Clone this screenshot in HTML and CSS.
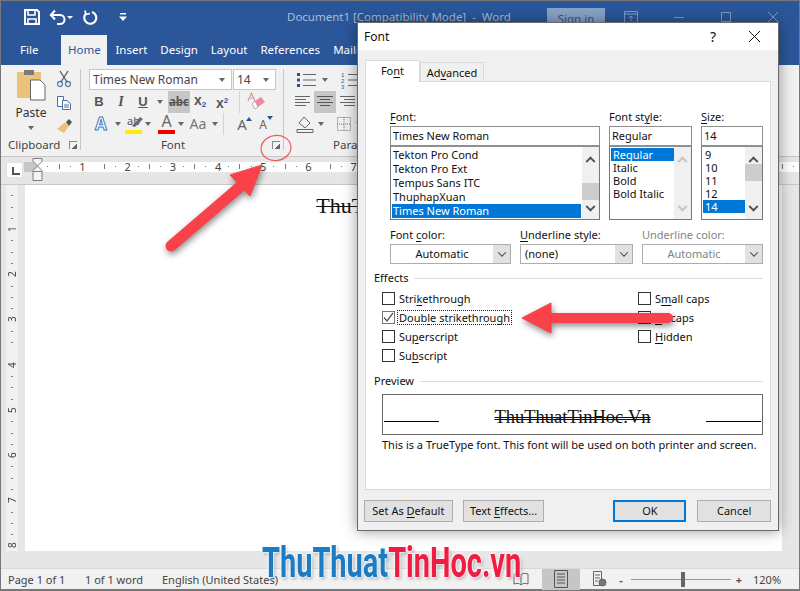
FILE: index.html
```html
<!DOCTYPE html>
<html lang="en">
<head>
<meta charset="UTF-8">
<meta name="viewport" content="width=device-width, initial-scale=1.0">
<title>Document1 - Word</title>
<link rel="stylesheet" href="styles.css">
</head>
<body>
<div class="app">
    <!-- title bar -->
    <header class="titlebar">
        <div class="qat">
            <svg width="18" height="18" viewBox="0 0 18 18" fill="none" stroke="#fff" stroke-width="2"><path d="M2 2h12l2 2v12H2z"/><path d="M5 2v5h7V2M5 16v-5h8v5" stroke-width="1.6"/></svg>
            <svg width="24" height="18" viewBox="0 0 24 18" fill="none" stroke="#fff" stroke-width="2"><path d="M2 7h9a4.500 4.500 0 0 1 0 9H8M6 2.500 1.800 7 6 11.500"/><path d="M18 8h6l-3 3z" fill="#fff" stroke="none"/></svg>
            <svg class="qat-redo" width="16" height="18" viewBox="0 0 16 18" fill="none" stroke="#fff" stroke-width="2.200"><path d="M10 4a6 6 0 1 1-6 1.500"/><path d="M3 2.500 4 6.500 8 5.500" stroke-width="1.800"/></svg>
            <svg class="qat-more" width="10" height="10" viewBox="0 0 10 10" fill="#fff"><path d="M2 1h6v1.500H2zM1 4.500h8L5 9z"/></svg>
        </div>
        <div class="doc-title">Document1 [Compatibility Mode]&nbsp; -&nbsp; Word</div>
        <div class="signin">Sign in</div>
        <div class="win-btns">
            <svg width="14" height="12" viewBox="0 0 14 12" fill="none" stroke="#7f9cc7"><path d="M.5.500h13v11H.5zM.5 3h13M7 10V5M5 7l2-2 2 2"/></svg>
            <svg width="12" height="12" viewBox="0 0 12 12" stroke="#7f9cc7"><path d="M1 6.500h10"/></svg>
            <svg width="12" height="12" viewBox="0 0 12 12" fill="none" stroke="#7f9cc7"><path d="M1.500 1.500h9v9h-9z"/></svg>
            <svg width="12" height="12" viewBox="0 0 12 12" stroke="#7f9cc7"><path d="M1 1l10 10M11 1 1 11"/></svg>
        </div>
    </header>

    <!-- ribbon tabs -->
    <nav class="tabs">
        <span class="tab tab-file">File</span>
        <span class="tab tab-active">Home</span>
        <span class="tab">Insert</span>
        <span class="tab">Design</span>
        <span class="tab">Layout</span>
        <span class="tab">References</span>
        <span class="tab">Mailings</span>
    </nav>

    <!-- ribbon -->
    <section class="ribbon">
        <div class="group group-clip">
            <div class="clip-body">
                <div class="paste">
                    <svg width="30" height="32" viewBox="0 0 30 32"><path d="M1 3h24v26H1z" fill="#eac27c"/><path d="M8 1h10v5H8z" fill="#7a7a7a"/><path d="M14.500 11H24l5 5v15H14.500z" fill="#fff" stroke="#666"/></svg>
                    <span>Paste</span>
                    <i class="caret"></i>
                </div>
                <div class="clip-tools">
                    <svg width="16" height="18" viewBox="0 0 16 18" fill="none" stroke="#5a84b8" stroke-width="1.300"><circle cx="4" cy="14" r="2.500"/><circle cx="12" cy="14" r="2.500"/><path d="M5 12 12 1M11 12 4 1" stroke="#555"/></svg>
                    <svg width="16" height="16" viewBox="0 0 16 16" fill="#fff" stroke="#4a6f9e"><path d="M1.500 1.500h6v10h-6z"/><path d="M6.500 5.500H11l3.500 3v6h-8z"/><path d="M8 10h5M8 12h5" /></svg>
                    <svg width="18" height="16" viewBox="0 0 18 16"><path d="M10 4l4 4-5 7-7-4z" fill="#eac27c"/><path d="M11 4l3-3 3 3-3 4z" fill="#555"/></svg>
                </div>
            </div>
            <div class="group-label"><span>Clipboard</span><i class="launcher"></i></div>
        </div>

        <div class="group group-font">
            <div class="font-row font-combos">
                <div class="combo combo-name">Times New Roman<i class="caret"></i></div>
                <div class="combo combo-size">14<i class="caret"></i></div>
            </div>
            <div class="font-row font-toggles">
                <b class="rb rb-b">B</b>
                <i class="rb rb-i">I</i>
                <u class="rb rb-u">U</u>
                <i class="caret caret-u"></i>
                <s class="rb rb-abc">abc</s>
                <b class="rb rb-sub">x<sub>2</sub></b>
                <b class="rb rb-sup">x<sup>2</sup></b>
                <em class="rb-sep"></em>
                <svg class="rb-eraser" width="20" height="20" viewBox="0 0 20 20"><path d="M9 9l6-4 4 5-7 5z" fill="#ee8ba0"/><path d="M9 9l3 6-3 2-3-5z" fill="#fff" stroke="#aaa"/><path d="M2 9 5.500 1 9 9M3.500 6h4" fill="none" stroke="#d79a9a" stroke-width="1.200"/></svg>
            </div>
            <div class="font-row font-colors">
                <span class="rb-fx">A</span><i class="caret"></i>
                <span class="rb-mark">ab<svg width="14" height="12" viewBox="0 0 14 12"><path d="M2 10 10 1l3 2-8 8z" fill="#6b6b6b"/></svg></span><i class="caret"></i>
                <span class="rb-color">A</span><i class="caret"></i>
                <span class="rb-case">Aa</span><i class="caret"></i>
                <em class="rb-sep"></em>
                <span class="rb-grow">A<i class="up"></i></span>
                <span class="rb-shrink">A<i class="down"></i></span>
            </div>
            <div class="group-label"><span class="label-mid">Font</span><i class="launcher"></i></div>
        </div>

        <div class="group group-para">
            <div class="para-row para-lists">
                <svg width="22" height="16" viewBox="0 0 22 16" fill="none" stroke="#666"><path d="M7 2.500h13M7 8h13M7 13.500h13"/><path d="M1 1h3v3H1zM1 6.500h3v3H1zM1 12h3v3H1z" fill="#2b579a" stroke="none"/></svg><i class="caret"></i>
                <svg width="22" height="18" viewBox="0 0 22 18" fill="none" stroke="#666"><path d="M8 3.500h13M8 9h13M8 14.500h13"/><g fill="#2b579a" stroke="none" font-size="6" font-family="Liberation Sans"><text x="1" y="6">1</text><text x="1" y="12">2</text><text x="1" y="18">3</text></g></svg><i class="caret"></i>
            </div>
            <div class="para-row para-align">
                <svg class="al" width="22" height="22" viewBox="0 0 22 22" stroke="#666"><path d="M3 5.500h15M3 8.500h11M3 11.500h15M3 14.500h11"/></svg>
                <svg class="al al-on" width="22" height="22" viewBox="0 0 22 22" stroke="#555"><path d="M3 5.500h16M6 8.500h10M3 11.500h16M6 14.500h10"/></svg>
                <svg class="al" width="22" height="22" viewBox="0 0 22 22" stroke="#666"><path d="M4 5.500h15M8 8.500h11M4 11.500h15M8 14.500h11"/></svg>
            </div>
            <div class="para-row para-lists">
                <svg width="18" height="18" viewBox="0 0 18 18" fill="none" stroke="#666"><path d="M3 8l5-6 6 6-5 5z"/><path d="M1 14.500h16v3H1z"/></svg><i class="caret"></i>
                <svg width="16" height="16" viewBox="0 0 16 16" fill="none" stroke="#777" stroke-dasharray="1 1"><path d="M1.500 1.500h13v13h-13zM8 1v14M1 8h14"/></svg><i class="caret"></i>
            </div>
            <div class="group-label"><span>Paragraph</span></div>
        </div>
    </section>

    <!-- horizontal ruler -->
    <div class="hruler-wrap">
        <i class="ruler-corner"></i>
        <div class="hruler">
            <span>1</span><span>2</span><span>3</span><span>4</span><span>5</span><span>6</span><span>7</span>
            <svg class="indent" width="11" height="24" viewBox="0 0 11 24" fill="#f4f4f4" stroke="#7d7d7d"><path d="M1 .500h9v3L5.500 8 1 3.500zM5.500 8l4.500 4.500v1H1v-1z"/><path d="M1 13.500h9v9H1z"/></svg>
        </div>
    </div>

    <!-- document area -->
    <main class="doc-area">
        <div class="vruler">
            <span>1</span><span>2</span><span>3</span><span>4</span><span>5</span><span>6</span><span>7</span><span>8</span>
        </div>
        <div class="page"><p class="doc-text">ThuThuatTinHoc.Vn</p></div>
    </main>

    <!-- status bar -->
    <footer class="statusbar">
        <span class="st st-page">Page 1 of 1</span>
        <span class="st st-words">1 of 1 word</span>
        <span class="st st-lang">English (United States)</span>
        <svg class="st-read" width="16" height="14" viewBox="0 0 16 14" fill="none" stroke="#666"><path d="M1 2c3-1 5-1 7 1 2-2 4-2 7-1v10c-3-1-5-1-7 1-2-2-4-2-7-1zM8 3v10"/></svg>
        <span class="view-on"><svg width="14" height="18" viewBox="0 0 14 18" fill="none" stroke="#555"><path d="M.5.500h13v17H.5zM3 4h8M3 7h8M3 10h8M3 13h8"/></svg></span>
        <svg class="st-web" width="16" height="16" viewBox="0 0 16 16" fill="none" stroke="#666"><path d="M2.500.500h8v14h-8zM4 4h5M4 7h5M4 10h3"/><circle cx="11.500" cy="11.500" r="3.500" fill="#777"/></svg>
        <b class="zoom-sign">-</b>
        <div class="zoom-track"><i></i></div>
        <b class="zoom-sign">+</b>
        <span class="st st-zoom">120%</span>
    </footer>
</div>

<!-- font dialog -->
<div class="dialog">
    <div class="dlg-title">
        <span>Font</span>
        <span class="dlg-help">?</span>
        <svg width="13" height="13" viewBox="0 0 13 13" stroke="#111"><path d="M1 1l11 11M12 1 1 12"/></svg>
    </div>
    <div class="dlg-body">
        <div class="dlg-tabs">
            <span class="dlg-tab dlg-tab-on">Fo<u>n</u>t</span>
            <span class="dlg-tab">Ad<u>v</u>anced</span>
        </div>
        <div class="panel">
            <div class="pickers">
                <div class="picker">
                    <label><u>F</u>ont:</label>
                    <div class="field">Times New Roman</div>
                    <div class="list list-font">
                        <ul>
                            <li>Tekton Pro Cond</li>
                            <li>Tekton Pro Ext</li>
                            <li>Tempus Sans ITC</li>
                            <li>ThuphapXuan</li>
                            <li class="sel">Times New Roman</li>
                        </ul>
                        <div class="scroll"><i class="up-ch"></i><em class="thumb thumb-font"></em><i class="down-ch"></i></div>
                    </div>
                </div>
                <div class="picker">
                    <label>Font st<u>y</u>le:</label>
                    <div class="field">Regular</div>
                    <div class="list list-tight">
                        <ul>
                            <li class="sel">Regular</li>
                            <li>Italic</li>
                            <li>Bold</li>
                            <li>Bold Italic</li>
                        </ul>
                        <div class="scroll scroll-off"><i class="up-ch"></i><i class="down-ch"></i></div>
                    </div>
                </div>
                <div class="picker">
                    <label><u>S</u>ize:</label>
                    <div class="field">14</div>
                    <div class="list list-tight">
                        <ul>
                            <li>9</li>
                            <li>10</li>
                            <li>11</li>
                            <li>12</li>
                            <li class="sel">14</li>
                        </ul>
                        <div class="scroll"><i class="up-ch"></i><em class="thumb thumb-size"></em><i class="down-ch"></i></div>
                    </div>
                </div>
            </div>

            <div class="selects">
                <div class="picker">
                    <label>Font <u>c</u>olor:</label>
                    <div class="select select-mid">Automatic<i class="drop"><i class="down-ch"></i></i></div>
                </div>
                <div class="picker">
                    <label><u>U</u>nderline style:</label>
                    <div class="select">(none)<i class="drop"><i class="down-ch"></i></i></div>
                </div>
                <div class="picker picker-off">
                    <label>Underline color:</label>
                    <div class="select select-mid">Automatic<i class="drop"><i class="down-ch"></i></i></div>
                </div>
            </div>

            <div class="legend"><span>Effects</span></div>
            <div class="effects">
                <div class="effects-col">
                    <div class="check"><i class="box"></i>Stri<u>k</u>ethrough</div>
                    <div class="check"><i class="box box-on"><svg width="11" height="11" viewBox="0 0 11 11" fill="none" stroke="#555" stroke-width="1.300"><path d="M1 5.500 4 9l6-8"/></svg></i><span class="focus">Doub<u>l</u>e strikethrough</span></div>
                    <div class="check"><i class="box"></i>Su<u>p</u>erscript</div>
                    <div class="check"><i class="box"></i>Su<u>b</u>script</div>
                </div>
                <div class="effects-col">
                    <div class="check"><i class="box"></i>S<u>m</u>all caps</div>
                    <div class="check"><i class="box"></i><u>A</u>ll caps</div>
                    <div class="check"><i class="box"></i><u>H</u>idden</div>
                </div>
            </div>

            <div class="legend legend-preview"><span>Preview</span></div>
            <div class="preview">
                <i class="preview-line"></i>
                <span class="preview-text">ThuThuatTinHoc.Vn</span>
                <i class="preview-line"></i>
            </div>
            <p class="note">This is a TrueType font. This font will be used on both printer and screen.</p>
        </div>
        <div class="dlg-buttons">
            <span class="btn btn-default">Set As <u>D</u>efault</span>
            <span class="btn btn-fx">Text <u>E</u>ffects...</span>
            <span class="btn btn-ok">OK</span>
            <span class="btn btn-cancel">Cancel</span>
        </div>
    </div>
</div>

<!-- hand drawn annotations -->
<svg class="marks" width="800" height="591" viewBox="0 0 800 591">
    <ellipse cx="276" cy="148" rx="15" ry="12.500" fill="none" stroke="#ee5a5e" stroke-width="1.200" transform="rotate(-8 276 148)"/>
    <g class="arrow" fill="#f94149" stroke="#f94149">
        <path d="M171 246 241 186" stroke-width="11" stroke-linecap="round"/>
        <path d="M262 165 230 175 250 196z" stroke-width="1" stroke-linejoin="round"/>
        <path d="M668 318H545" stroke-width="10" stroke-linecap="round"/>
        <path d="M522 318 551 303V333z" stroke-width="1" stroke-linejoin="round"/>
    </g>
</svg>

<div class="brand"><span class="brand-blue">ThuThuat</span><span class="brand-red">TinHoc.vn</span></div>
</body>
</html>
```

FILE: styles.css
```css
* {
    box-sizing: border-box;
}

html, body {
    margin: 0;
    height: 100%;
    overflow: hidden;
}

body {
    position: relative;
    font-family: "Noto Sans", sans-serif;
    font-size: 12px;
    color: #444;
}

i, em {
    font-style: normal;
}

.app {
    display: flex;
    flex-direction: column;
    height: 591px;
    border: 1px solid #777;
    border-width: 1px 1px 2px 1px;
    background: #e6e6e6;
}

/* title bar */
.titlebar {
    display: flex;
    align-items: center;
    height: 31px;
    flex: none;
    background: #2b579a;
    color: #a9bcd9;
}

.qat {
    display: flex;
    align-items: center;
    width: 286px;
    padding-left: 22px;
    gap: 8px;
}

.qat-redo {
    margin-left: 1px;
}

.qat-more {
    margin-left: 12px;
}

.doc-title {
    width: 260px;
    font-size: 11.5px;
}

.signin {
    width: 58px;
    height: 24px;
    margin-top: 6px;
    background: #87a3c9;
    color: #2b579a;
    text-align: center;
    line-height: 22px;
    font-size: 11.5px;
}

.win-btns {
    display: flex;
    align-items: center;
    gap: 35px;
    margin-left: 19px;
}

/* ribbon tabs */
.tabs {
    display: flex;
    align-items: flex-end;
    height: 33px;
    flex: none;
    padding-left: 19px;
    background: #2b579a;
    color: #fff;
    font-size: 11.5px;
}

.tab {
    height: 30px;
    line-height: 29px;
    margin-right: 13px;
}

.tab-file {
    margin-right: 23px;
}

.tab-active {
    width: 46px;
    margin-right: 8px;
    background: #f1f1f1;
    color: #2b579a;
    text-align: center;
}

/* ribbon */
.ribbon {
    display: flex;
    height: 92px;
    flex: none;
    background: #f1f1f1;
    border-bottom: 1px solid #c6c6c6;
    padding-top: 4px;
}

.group {
    position: relative;
    border-right: 1px solid #c6c6c6;
    margin-bottom: 6px;
}

.group-clip {
    width: 80px;
}

.group-font {
    width: 203px;
    padding-left: 8px;
}

.group-para {
    width: 200px;
    padding-left: 8px;
    border-right: none;
}

.group-label {
    position: absolute;
    left: 0;
    right: 0;
    bottom: -3px;
    height: 16px;
    padding-left: 7px;
    font-size: 11.5px;
    line-height: 16px;
    color: #444;
}

.label-mid {
    position: absolute;
    left: 0;
    width: 100%;
    padding-right: 18px;
    text-align: center;
}

.group-para .group-label {
    padding-left: 49px;
}

.launcher {
    position: absolute;
    right: 3px;
    top: 4px;
    width: 8px;
    height: 8px;
    border: 1px solid #888;
    border-width: 1px 0 0 1px;
}

.launcher::after {
    content: "";
    position: absolute;
    right: 0;
    bottom: 0;
    width: 5px;
    height: 5px;
    background: linear-gradient(135deg, transparent 45%, #666 45%);
}

.caret {
    display: inline-block;
    width: 0;
    height: 0;
    border: 3.5px solid transparent;
    border-top: 4px solid #666;
    border-bottom: 0;
}

.clip-body {
    display: flex;
    padding-left: 15px;
}

.paste {
    display: flex;
    flex-direction: column;
    align-items: center;
    width: 30px;
    font-size: 12px;
    color: #333;
}

.paste span {
    margin-top: 3px;
    line-height: 17px;
}

.paste .caret {
    margin-top: 5px;
}

.clip-tools {
    display: flex;
    flex-direction: column;
    align-items: center;
    gap: 7px;
    margin-left: 9px;
    padding-top: 1px;
}

.font-row {
    display: flex;
    align-items: center;
    height: 22px;
}

.font-combos {
    height: 21px;
    margin-bottom: 1px;
}

.combo {
    display: flex;
    align-items: center;
    justify-content: space-between;
    height: 21px;
    padding: 0 6px 0 3px;
    background: #fff;
    border: 1px solid #c6c6c6;
    font-size: 12px;
    color: #444;
}

.combo-name {
    width: 143px;
}

.combo-size {
    width: 43px;
    margin-left: 1px;
}

.rb {
    display: block;
    text-align: center;
    font-size: 13px;
    color: #555;
    line-height: 22px;
    text-decoration-thickness: 1px;
}

.rb-b {
    width: 22px;
    margin-left: -1px;
    font-family: "Liberation Sans", sans-serif;
}

.rb-i {
    width: 22px;
    font-family: "Liberation Serif", serif;
    font-style: italic;
    font-weight: bold;
    font-size: 14px;
}

.rb-u {
    width: 22px;
    font-family: "Liberation Sans", sans-serif;
    font-weight: bold;
}

.caret-u {
    margin: 0 5px 0 3px;
}

.rb-abc {
    width: 22px;
    background: #c6c6c6;
    font-size: 11.5px;
    font-weight: bold;
}

.rb-sub, .rb-sup {
    width: 22px;
    font-family: "Liberation Sans", sans-serif;
    font-size: 14px;
}

.rb-sub {
    margin-left: -1px;
}

.rb-sub sub {
    font-size: 8px;
    color: #2b579a;
    vertical-align: -2px;
}

.rb-sup sup {
    font-size: 8px;
    color: #2b579a;
    vertical-align: 5px;
}

.rb-sep {
    display: block;
    width: 1px;
    height: 22px;
    margin: 0 6px 0 6px;
    background: #d4d4d4;
}

.font-colors span {
    display: block;
    position: relative;
    font-family: "Noto Sans", sans-serif;
    text-align: center;
    line-height: 20px;
}

.font-colors .caret {
    margin-left: 3px;
}

.rb-fx {
    width: 22px;
    margin-left: 1px;
    font-size: 17px;
    font-weight: bold;
    color: #fff;
    -webkit-text-stroke: 1px #3f7cc2;
}

.rb-mark {
    width: 17px;
    height: 20px;
    margin-left: 4px;
    font-size: 11px;
    border-bottom: 4px solid #ffed00;
    line-height: 14px !important;
    color: #555;
    white-space: nowrap;
}

.rb-mark svg {
    position: absolute;
    left: 5px;
    top: 2px;
}

.rb-color {
    width: 17px;
    height: 20px;
    margin-left: 7px;
    font-size: 16px;
    border-bottom: 4px solid #f00000;
    line-height: 15px !important;
    color: #666;
}

.rb-case {
    width: 22px;
    margin-left: 3px;
    font-size: 14px;
    color: #777;
}

.font-colors .rb-sep {
    margin-left: 5px;
    margin-right: 7px;
}

.rb-grow, .rb-shrink {
    width: 22px;
    color: #666;
    font-size: 15px;
}

.rb-shrink {
    margin-left: -1px;
    font-size: 12px;
    padding-top: 2px;
}

.up, .down {
    position: absolute;
    right: 1px;
    top: 3px;
    width: 0;
    height: 0;
    border: 3px solid transparent;
}

.up {
    border-bottom: 4px solid #2b579a;
    border-top: 0;
}

.down {
    border-top: 4px solid #2b579a;
    border-bottom: 0;
}

.para-row {
    display: flex;
    align-items: center;
    gap: 4px;
    height: 22px;
}

.para-lists {
    padding-left: 4px;
}

.para-row svg + .caret {
    margin-right: 8px;
}

.para-align {
    gap: 0;
}

.al-on {
    background: #c6c6c6;
}

/* rulers */
.hruler-wrap {
    display: flex;
    height: 28px;
    flex: none;
    padding: 5px 0 0 5px;
    background: #e6e6e6;
    border-bottom: 1px solid #c8c8c8;
}

.ruler-corner {
    width: 17px;
    height: 16px;
    background: #fff;
    border: 1px solid #e2e2e2;
    position: relative;
}

.ruler-corner::after {
    content: "";
    position: absolute;
    left: 5px;
    top: 4px;
    width: 6px;
    height: 6px;
    border: solid #555;
    border-width: 0 0 2px 2px;
}

.hruler {
    position: relative;
    display: flex;
    width: 800px;
    height: 10px;
    margin-left: 1px;
    padding-left: 54px;
    font-size: 11px;
    line-height: 10px;
    color: #444;
    background:
        linear-gradient(#c6c6c6, #c6c6c6) 0 0 / 13px 10px no-repeat,
        repeating-linear-gradient(90deg, transparent 0 10.3px, #777 10.3px 11.3px) 13px 4px / 100% 1px no-repeat,
        repeating-linear-gradient(90deg, transparent 0 21.6px, #777 21.6px 22.6px) 13px 2px / 100% 5px no-repeat,
        #fff;
    background-color: #fff;
}

.hruler span {
    flex: none;
    width: 10px;
    margin-right: 35.200px;
    background: #fff;
    text-align: center;
}

.indent {
    position: absolute;
    left: 8px;
    top: -4px;
}

.doc-area {
    display: flex;
    flex: 1;
    min-height: 0;
    padding-bottom: 17px;
    padding-left: 5px;
}

.vruler {
    width: 12px;
    display: flex;
    flex-direction: column;
    flex: none;
    padding-top: 38px;
    background:
        repeating-linear-gradient(transparent 0 10.3px, #777 10.3px 11.3px) 5px 0 / 2px 100% no-repeat,
        #f1f1f1;
    font-size: 10px;
    color: #444;
}

.vruler span {
    flex: none;
    height: 12px;
    margin-bottom: 33.200px;
    background: #f1f1f1;
    text-align: center;
    line-height: 12px;
    writing-mode: vertical-rl;
    transform: rotate(180deg);
}

.page {
    width: 757px;
    margin-left: 7px;
    padding-left: 11px;
    background: #fff;
}

.doc-text {
    margin: 8px 0 0;
    text-align: center;
    font-family: "Liberation Serif", serif;
    font-size: 22px;
    line-height: 26px;
    color: #111;
    text-decoration: line-through;
    text-decoration-thickness: 1px;
}

/* status bar */
.statusbar {
    display: flex;
    align-items: center;
    height: 21px;
    flex: none;
    padding-left: 7px;
    background: #f1f1f1;
    border-top: 1px solid #d8d8d8;
    font-size: 11px;
    color: #444;
}

.st-page {
    width: 77px;
}

.st-words {
    width: 77px;
}

.st-lang {
    width: 351px;
}

.st-read {
    margin-right: 13px;
}

.view-on {
    display: flex;
    align-items: center;
    justify-content: center;
    width: 38px;
    height: 21px;
    background: #c6c6c6;
}

.st-web {
    margin: 0 9px 0 11px;
}

.zoom-sign {
    width: 10px;
    text-align: center;
    color: #555;
}

.zoom-track {
    position: relative;
    width: 100px;
    height: 1px;
    margin: 0 3px 0 5px;
    background: #999;
}

.zoom-track i {
    position: absolute;
    left: 50px;
    top: -7px;
    width: 4px;
    height: 15px;
    background: #666;
}

.st-zoom {
    margin-left: 9px;
}

/* font dialog */
.dialog {
    position: absolute;
    left: 357px;
    top: 22px;
    width: 422px;
    height: 509px;
    border: 1px solid #6a6a6a;
    background: #f0f0f0;
    box-shadow: 0 0 14px rgba(0, 0, 0, 0.4);
    color: #111;
    font-size: 11px;
}

.dlg-title {
    display: flex;
    align-items: center;
    height: 27px;
    padding: 0 17px 0 6px;
    background: #fff;
    font-size: 12px;
}

.dlg-title span:first-child {
    flex: 1;
}

.dlg-help {
    margin-right: 32px;
    font-size: 14px;
}

.dlg-body {
    padding: 10px 7px 0;
}

.dlg-tabs {
    display: flex;
    align-items: flex-end;
    height: 21px;
    padding-left: 0;
}

.dlg-tab {
    width: 64px;
    height: 19px;
    background: #f0f0f0;
    border: 1px solid #d9d9d9;
    border-bottom: none;
    text-align: center;
    line-height: 20px;
}

.dlg-tab-on {
    position: relative;
    z-index: 1;
    width: 55px;
    height: 22px;
    margin-left: 0;
    background: #fff;
    margin-bottom: -1px;
}

.panel {
    height: 409px;
    padding: 27px 7px 0 24px;
    background: #fff;
    border: 1px solid #d9d9d9;
}

.pickers {
    display: grid;
    grid-template-columns: 210px 83px 62px;
    gap: 9px;
}

.picker label {
    display: block;
    height: 17px;
    line-height: 15px;
}

.picker u, .dlg-tab u, .check u, .btn u {
    text-underline-offset: 2px;
}

.field {
    height: 20px;
    padding-left: 2px;
    border: 1px solid #8f8f8f;
    line-height: 18px;
}

.list {
    display: flex;
    height: 74px;
    border: 1px solid #777;
    border-top: 1px solid #8f8f8f;
    overflow: hidden;
}

.list ul {
    flex: 1;
    min-width: 0;
    margin: 0;
    padding: 1px 1px 0 1px;
    list-style: none;
}

.list li {
    height: 14px;
    padding-left: 1px;
    line-height: 14px;
    white-space: nowrap;
}

.list-tight ul {
    padding: 1px 0 0 1px;
}

.list-tight li {
    height: 13px;
    padding-left: 2px;
    line-height: 13px;
}

.list .sel {
    background: #0078d7;
    color: #fff;
}

.scroll {
    display: flex;
    flex-direction: column;
    align-items: center;
    flex: none;
    width: 17px;
    padding: 8px 0 6px;
    background: #f0f0f0;
}

.thumb {
    display: block;
    width: 100%;
    background: #cdcdcd;
}

.thumb-font {
    height: 17px;
    margin: auto 0 6px;
}

.thumb-size {
    height: 17px;
    margin: 2px 0 auto;
}

.scroll .down-ch {
    margin-top: auto;
}

.thumb + .down-ch {
    margin-top: 0;
}

.up-ch, .down-ch {
    display: block;
    width: 7px;
    height: 7px;
    border: solid #555;
    border-width: 2px 0 0 2px;
    transform: rotate(45deg) translate(2px, 2px);
}

.down-ch {
    transform: rotate(225deg) translate(2px, 2px);
}

.scroll-off .up-ch, .scroll-off .down-ch {
    border-color: #c4c4c4;
}

.selects {
    display: grid;
    grid-template-columns: 121px 113px 121px;
    gap: 9px;
    margin-top: 7px;
}

.select {
    position: relative;
    height: 20px;
    padding-left: 4px;
    border: 1px solid #adadad;
    line-height: 18px;
}

.select-mid {
    padding-left: 0;
    padding-right: 17px;
    text-align: center;
}

.drop {
    position: absolute;
    right: 0;
    top: 0;
    bottom: 0;
    display: flex;
    align-items: center;
    justify-content: center;
    width: 17px;
    background: #e1e1e1;
}

.drop .down-ch {
    width: 6px;
    height: 6px;
    border-width: 1px 0 0 1px;
    border-color: #444;
    transform: rotate(225deg) translate(1px, 1px);
}

.picker-off {
    color: #838383;
}

.legend {
    display: flex;
    align-items: center;
    height: 16px;
    margin: 6px 0 0 -16px;
    gap: 6px;
    line-height: 16px;
}

.legend::after {
    content: "";
    flex: 1;
    height: 1px;
    background: #dcdcdc;
}

.effects {
    display: flex;
    margin: 3px 0 0 -8px;
}

.effects-col:first-child {
    width: 256px;
}

.check {
    display: flex;
    align-items: center;
    height: 19px;
    white-space: nowrap;
}

.box {
    display: flex;
    align-items: center;
    justify-content: center;
    flex: none;
    width: 13px;
    height: 13px;
    margin-right: 4px;
    background: #fff;
    border: 1px solid #333;
}

.box-on {
    border-color: #777;
}

.focus {
    padding: 0 1px;
    margin-left: -1px;
    outline: 1px dotted #222;
    line-height: 13px;
}

.legend-preview {
    margin-top: 8px;
}

.preview {
    display: flex;
    align-items: flex-end;
    justify-content: space-between;
    height: 41px;
    margin: 5px 0 0 -8px;
    padding: 0 1px 12px;
    border: 1px solid #666;
}

.preview-line {
    width: 55px;
    height: 1px;
    background: #000;
}

.preview-text {
    margin-bottom: -6px;
    font-family: "Liberation Serif", serif;
    font-size: 18.500px;
    line-height: 22px;
    text-decoration: line-through double;
    text-decoration-thickness: 1px;
}

.note {
    margin: 2px 0 0 -8px;
    line-height: 16px;
    white-space: nowrap;
}

.dlg-buttons {
    display: flex;
    margin: 10px 0 0 -1px;
}

.btn {
    height: 22px;
    background: #e1e1e1;
    border: 1px solid #adadad;
    text-align: center;
    line-height: 20px;
}

.btn-default {
    width: 89px;
}

.btn-fx {
    width: 82px;
    margin-left: 10px;
}

.btn-ok {
    width: 73px;
    margin-left: 69px;
    border: 2px solid #0078d7;
    line-height: 18px;
}

.btn-cancel {
    width: 74px;
    margin-left: 11px;
}

/* annotations on top of everything */
.marks {
    position: absolute;
    left: 0;
    top: 0;
    pointer-events: none;
}

.arrow {
    filter: drop-shadow(1px 3px 3px rgba(0, 0, 0, 0.45));
}

.brand {
    position: absolute;
    left: 262px;
    top: 540px;
    font-family: "Roboto", sans-serif;
    font-size: 42px;
    font-weight: bold;
    line-height: 46px;
    white-space: nowrap;
    transform: scaleX(0.69);
    transform-origin: 0 0;
    text-shadow: 0 0 3px #fff, 0 0 3px #fff, 0 0 3px #fff, 2px 2px 4px rgba(0, 0, 0, 0.35);
}

.brand-blue {
    color: #1b7cc5;
}

.brand-red {
    color: #ef1c43;
}
```
